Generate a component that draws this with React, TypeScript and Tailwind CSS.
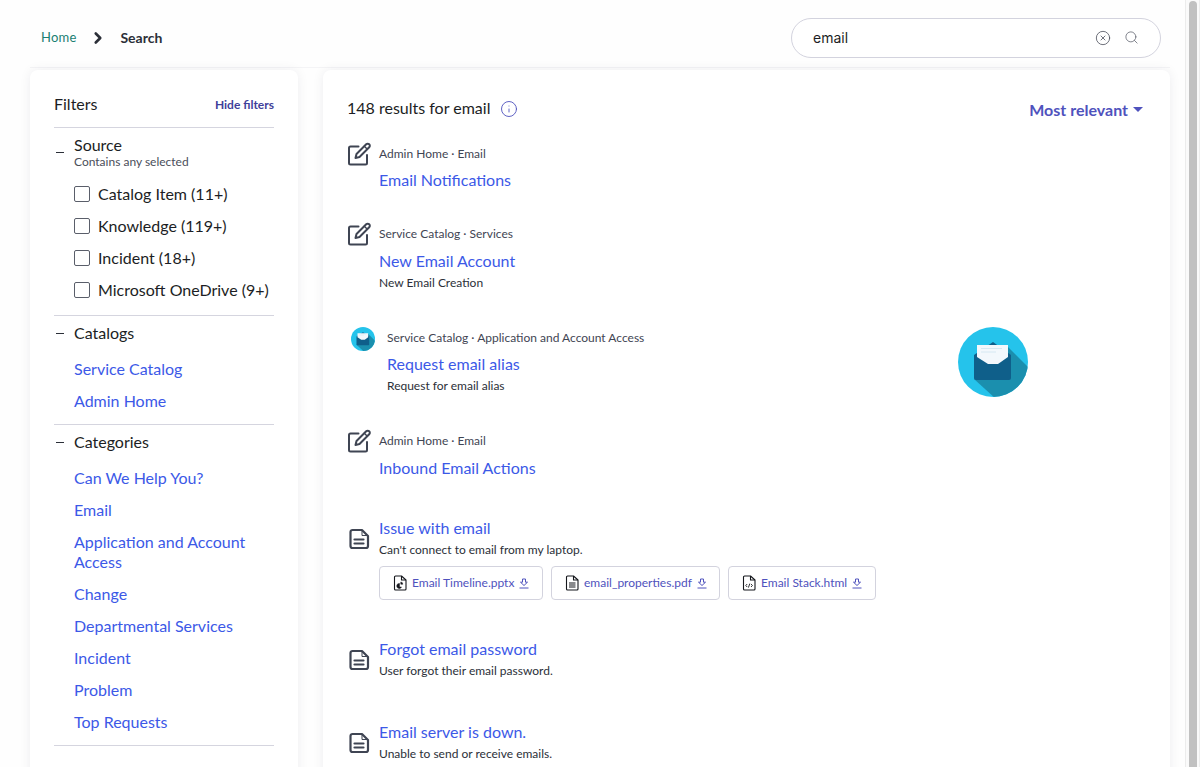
import { CircleX, Search, Info, ChevronRight } from "lucide-react";

const catalogs = ["Service Catalog", "Admin Home"];
const categories = [
    "Can We Help You?",
    "Email",
    "Application and Account Access",
    "Change",
    "Departmental Services",
    "Incident",
    "Problem",
    "Top Requests",
];
const sources = ["Catalog Item (11+)", "Knowledge (119+)", "Incident (18+)", "Microsoft OneDrive (9+)"];

function DocIcon() {
    return (
        <svg width="24" height="24" viewBox="0 0 24 24" fill="none" stroke="#3f4553" strokeWidth="2.2" strokeLinejoin="round" strokeLinecap="round">
            <path d="M5.5 3h9.5L21 9v10a2 2 0 0 1-2 2H5.500a2 2 0 0 1-2-2V5a2 2 0 0 1 2-2z" />
            <path d="M15 3.500V8.500h5.500" strokeWidth="1" />
            <path d="M7.500 12.500h9M7.500 16.500h9" />
        </svg>
    );
}

function EditIcon() {
    return (
        <svg width="24" height="24" viewBox="0 0 24 24" fill="none" stroke="#3f4553" strokeWidth="2" strokeLinejoin="round" strokeLinecap="round" className="shrink-0 mt-[-4px]">
            <path d="M11.500 4.500H3.500a1.500 1.500 0 0 0-1.500 1.500v15a1.500 1.500 0 0 0 1.500 1.500h15a1.500 1.500 0 0 0 1.500-1.500v-8" />
            <path d="M19.200 2.300a2.100 2.100 0 0 1 3 3L12.500 15l-4 1 1-4z" />
            <path d="M17.300 4.200l3 3" strokeWidth="1.400" />
        </svg>
    );
}

function DownloadIcon() {
    return (
        <svg width="10" height="11" viewBox="0 0 10 11" fill="none" stroke="#4f52bd" strokeWidth="1" strokeLinejoin="round" className="shrink-0">
            <path d="M3.500 1h3v3.200h2L5 7.500 1.500 4.200h2z" />
            <path d="M0.500 10h9" />
        </svg>
    );
}

function FileIcon({ kind }: { kind: string }) {
    return (
        <svg width="14" height="16" viewBox="0 0 14 16" fill="none" stroke="#15171c" strokeWidth="1.100" strokeLinejoin="round" className="shrink-0">
            <path d="M2.500 1h6L13 5v9a1 1 0 0 1-1 1H2.500a1 1 0 0 1-1-1V2a1 1 0 0 1 1-1z" />
            <path d="M8.500 1v4H13" />
            {kind === "pptx" && <path d="M6.500 8.500a2.500 2.500 0 1 0 2 3.500H6.500z M7.800 7a2.200 2.200 0 0 1 2 2.200H7.800z" fill="#15171c" strokeWidth="0.500" />}
            {kind === "pdf" && <path d="M4 8h6.500M4 10h6.500M4 12h6.500" />}
            {kind === "html" && <path d="M5.200 9 3.800 10.500 5.200 12M9 9l1.400 1.500L9 12M7.800 8.600l-1.400 4" strokeWidth="0.900" />}
        </svg>
    );
}

function MailBadge({ size }: { size: number }) {
    return (
        <svg width={size} height={size} viewBox="0 0 70 70">
            <defs>
                <clipPath id={`badge-${size}`}>
                    <circle cx="35" cy="35" r="35" />
                </clipPath>
            </defs>
            <circle cx="35" cy="35" r="35" fill="#25c3eb" />
            <path d="M50 20 L72 42 V72 H38 L16 52z" fill="#1b8fae" clipPath={`url(#badge-${size})`} />
            <path d="M16 28 L35 15 L53 28 V51 a2 2 0 0 1-2 2H18 a2 2 0 0 1-2-2z" fill="#0f5f8a" />
            <path d="M19 18 H50 V30 L40 37 H30 L19 30z" fill="#f3f8fc" />
            <path d="M23 21.500 H44 M23 25 H38" stroke="#d6e8f2" strokeWidth="1" />
        </svg>
    );
}

function Attachment({ name, kind, className }: { name: string; kind: string; className: string }) {
    return (
        <div className={`h-[34px] flex items-center gap-[5px] pl-[13px] border border-[#d3d3de] rounded-[4px] bg-white ${className}`}>
            <FileIcon kind={kind} />
            <span className="text-[12px] text-[#4f52bd] mb-[1px] whitespace-nowrap">{name}</span>
            <DownloadIcon />
        </div>
    );
}

function Divider() {
    return <div className="h-px bg-[#d5d5df]" />;
}

function FilterLink({ label }: { label: string }) {
    return <div className="pl-5 mb-3 text-[16px] leading-5 text-[#3c59e7]">{label}</div>;
}

function MetaResult({ meta, title, desc, className, titleClass = "mt-[8px]" }: { meta: string; title: string; desc?: string; className: string; titleClass?: string }) {
    return (
        <div className={`flex ${className}`}>
            <EditIcon />
            <div className="ml-[8px]">
                <div className="text-[12px] leading-4 text-[#3f4553]">{meta}</div>
                <div className={`text-[16px] leading-5 text-[#3c59e7] ${titleClass}`}>{title}</div>
                {desc && <div className="mt-[4px] text-[12px] leading-4 text-[#2b2f38]">{desc}</div>}
            </div>
        </div>
    );
}

function DocResult({ title, desc, className, children }: { title: string; desc: string; className: string; children?: React.ReactNode }) {
    return (
        <div className={`flex ${className}`}>
            <div className="w-[24px] mt-[9px] shrink-0">
                <DocIcon />
            </div>
            <div className="ml-[8px]">
                <div className="text-[16px] leading-5 text-[#3c59e7]">{title}</div>
                <div className="mt-[4px] text-[12px] leading-4 text-[#2b2f38]">{desc}</div>
                {children}
            </div>
        </div>
    );
}

export default function App() {
    return (
        <div className="h-[767px] w-[1200px] flex overflow-hidden bg-white font-['Lato','Noto_Sans',sans-serif]">
            <div className="w-[1185px] pl-[30px] pr-[15px] shrink-0 bg-[#fefefe]">
                <header className="h-[68px] pt-[8px] pr-[9px] flex items-center justify-between border-b border-[#f4f4f6]">
                    <div className="flex items-center pl-[11px]">
                        <span className="text-[13px] tracking-[0.2px] text-[#1a7f72] mt-[1px]">Home</span>
                        <ChevronRight size={18} color="#2b2f38" strokeWidth={3.500} className="ml-[13px]" />
                        <span className="ml-[13px] text-[14px] font-bold text-[#2b2f38]">Search</span>
                    </div>
                    <div className="w-[370px] h-10 flex items-center rounded-full border border-[#d3d3de] bg-white pl-[21px] pr-[21px]">
                        <span className="flex-1 text-[14px] text-[#1c1e24] font-['Inter',sans-serif]">email</span>
                        <CircleX size={16} color="#4a4e5a" strokeWidth={1.200} />
                        <Search size={15} color="#5a5e6a" strokeWidth={1.200} className="ml-[13px]" />
                    </div>
                </header>

                <div className="flex mt-[2px] gap-[25px]">
                    <aside className="w-[268px] h-[800px] shrink-0 rounded-t-[8px] bg-white px-6 pt-[24px] shadow-[0_0_12px_rgba(30,30,60,0.07)]">
                        <div className="flex items-center justify-between h-5 mb-[13px]">
                            <span className="text-[16px] text-[#1c1e24]">Filters</span>
                            <span className="text-[12px] font-bold text-[#3f3f9a] mt-[2px]">Hide filters</span>
                        </div>
                        <Divider />

                        <div className="flex mt-[7px]">
                            <span className="w-5 h-px mt-[17px] shrink-0"><span className="block w-2 h-px bg-[#2b2f38] ml-[2px]" /></span>
                            <div>
                                <div className="text-[16px] leading-5 text-[#1c1e24]">Source</div>
                                <div className="text-[12px] leading-[14px] text-[#4a4e5a]">Contains any selected</div>
                            </div>
                        </div>
                        <div className="mt-[15px] mb-[15px] pl-5">
                            {sources.map((s) => (
                                <div className="flex items-center h-5 mb-3 last:mb-0" key={s}>
                                    <span className="w-4 h-4 rounded-[2px] border border-[#5a5e6a] bg-white shrink-0" />
                                    <span className="ml-2 text-[16px] text-[#1c1e24] whitespace-nowrap">{s}</span>
                                </div>
                            ))}
                        </div>
                        <Divider />

                        <div className="flex items-center h-5 mt-[7px] mb-[16px]">
                            <span className="w-5"><span className="block w-2 h-px bg-[#2b2f38] ml-[2px]" /></span>
                            <span className="text-[16px] text-[#1c1e24]">Catalogs</span>
                        </div>
                        {catalogs.map((c) => (
                            <FilterLink label={c} key={c} />
                        ))}
                        <div className="h-px" />
                        <Divider />

                        <div className="flex items-center h-5 mt-[7px] mb-[16px]">
                            <span className="w-5"><span className="block w-2 h-px bg-[#2b2f38] ml-[2px]" /></span>
                            <span className="text-[16px] text-[#1c1e24]">Categories</span>
                        </div>
                        {categories.map((c) => (
                            <FilterLink label={c} key={c} />
                        ))}
                        <div className="h-px" />
                        <Divider />
                    </aside>

                    <main className="flex-1 h-[800px] rounded-t-[8px] bg-white pl-6 pr-[27px] pt-[28px] shadow-[0_0_12px_rgba(30,30,60,0.07)]">
                        <div className="flex items-center justify-between h-5">
                            <div className="flex items-center">
                                <span className="text-[16px] text-[#1c1e24]">148 results for email</span>
                                <Info size={18} color="#4f52bd" strokeWidth={1.200} className="ml-[10px] mt-[1px]" />
                            </div>
                            <div className="flex items-center mt-[3px]">
                                <span className="text-[16px] font-bold text-[#4f52bd]">Most relevant</span>
                                <span className="ml-[5px] w-0 h-0 border-x-[5px] border-x-transparent border-t-[5px] border-t-[#4f52bd]" />
                            </div>
                        </div>

                        <MetaResult className="mt-[28px]" meta="Admin Home · Email" title="Email Notifications" />
                        <MetaResult className="mt-[36px]" titleClass="mt-[9px]" meta="Service Catalog · Services" title="New Email Account" desc="New Email Creation" />

                        <div className="flex mt-[39px] relative">
                            <div className="w-[24px] mt-[-3px] ml-[4px] shrink-0">
                                <MailBadge size={24} />
                            </div>
                            <div className="ml-[12px]">
                                <div className="text-[12px] leading-4 text-[#3f4553]">Service Catalog · Application and Account Access</div>
                                <div className="mt-[8px] text-[16px] leading-5 text-[#3c59e7]">Request email alias</div>
                                <div className="mt-[4px] text-[12px] leading-4 text-[#2b2f38]">Request for email alias</div>
                            </div>
                            <div className="absolute left-[611px] top-[-3px]">
                                <MailBadge size={70} />
                            </div>
                        </div>

                        <MetaResult className="mt-[39px]" titleClass="mt-[9px]" meta="Admin Home · Email" title="Inbound Email Actions" />

                        <DocResult className="mt-[40px]" title="Issue with email" desc="Can't connect to email from my laptop.">
                            <div className="flex gap-2 mt-[8px]">
                                <Attachment className="w-[164px]" name="Email Timeline.pptx" kind="pptx" />
                                <Attachment className="w-[169px]" name="email_properties.pdf" kind="pdf" />
                                <Attachment className="w-[148px]" name="Email Stack.html" kind="html" />
                            </div>
                        </DocResult>
                        <DocResult className="mt-[39px]" title="Forgot email password" desc="User forgot their email password." />
                        <DocResult className="mt-[43px]" title="Email server is down." desc="Unable to send or receive emails." />
                    </main>
                </div>
            </div>

            <div className="flex-1 bg-[#fafafa] border-x border-[#ececec] pl-[3px] pt-[1px]">
                <div className="h-[800px] w-[8px] rounded-full bg-[#c1c1c1]" />
            </div>
        </div>
    );
}
